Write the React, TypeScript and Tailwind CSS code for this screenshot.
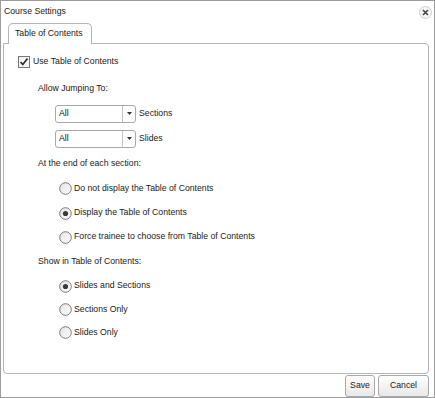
import { ReactNode } from 'react'

const font = { fontFamily: '"Liberation Sans", Arial, sans-serif' }

const Radio = ({ checked }: { checked?: boolean }) => (
  <svg width="13" height="13" viewBox="0 0 13 13" className="shrink-0">
    <defs>
      <linearGradient id="rg" x1="0" y1="0" x2="1" y2="1">
        <stop offset="0" stopColor="#e2e2e2" />
        <stop offset="1" stopColor="#ffffff" />
      </linearGradient>
    </defs>
    <circle cx="6.5" cy="6.5" r="5.8" fill="url(#rg)" stroke="#7b7b7b" strokeWidth="1" />
    {checked && <circle cx="6.5" cy="6.5" r="2.6" fill="#3a3a3a" />}
  </svg>
)

const Select = () => (
  <div className="flex h-[18px] w-[81px] items-center rounded-[3px] border border-[#a9a9a9] bg-white">
    <span className="flex-1 pl-[3px] text-[8.7px] text-[#111]">All</span>
    <div className="flex h-full w-[13px] items-center justify-center border-l border-[#c4c4c4]">
      <svg width="5" height="3" viewBox="0 0 5 3">
        <path d="M0 0h5L2.5 3z" fill="#333" />
      </svg>
    </div>
  </div>
)

const Row = ({ h, indent, children }: { h: string; indent: string; children: ReactNode }) => (
  <div className={`flex items-center ${h} ${indent}`}>{children}</div>
)

export default function App() {
  return (
    <div
      className="flex h-[398px] w-[435px] flex-col border border-[#9c9c9c] bg-white text-[8.7px] text-[#1a1a1a]"
      style={font}
    >
      {/* title bar */}
      <div className="flex h-[22px] items-center justify-between pl-[3px] pr-[2px]">
        <span>Course Settings</span>
        <div className="flex h-[13px] w-[13px] items-center justify-center rounded-full border border-[#cfcfcf] bg-[#f6f6f6]">
          <svg width="7" height="7" viewBox="0 0 7 7">
            <path d="M1 1l5 5M6 1l-5 5" stroke="#444" strokeWidth="1.6" />
          </svg>
        </div>
      </div>

      {/* tabs */}
      <div className="flex pl-[7px]">
        <div className="relative z-10 -mb-px flex h-[21px] w-[84px] items-center rounded-t-[5px] border border-b-0 border-[#b4b4b4] bg-white pl-[6px]">
          Table of Contents
        </div>
      </div>

      {/* panel */}
      <div className="ml-[2px] mr-[5px] flex h-[331px] flex-col rounded-b-[4px] rounded-tr-[4px] border border-[#b4b4b4]">
        <Row h="h-[24px] mt-[6px]" indent="pl-[14px]">
          <svg width="12" height="12" viewBox="0 0 12 12" className="mr-[3px] shrink-0">
            <rect x="0.5" y="0.5" width="11" height="11" fill="#f4f4f4" stroke="#777" />
            <path d="M2.5 6l2.3 2.5L9.5 2.5" fill="none" stroke="#2a2a2a" strokeWidth="1.7" />
          </svg>
          Use Table of Contents
        </Row>
        <Row h="h-[24px] mt-[3px]" indent="pl-[34px]">Allow Jumping To:</Row>
        <Row h="h-[25px]" indent="pl-[51px]">
          <Select />
          <span className="ml-[3px]">Sections</span>
        </Row>
        <Row h="h-[25px]" indent="pl-[51px]">
          <Select />
          <span className="ml-[3px]">Slides</span>
        </Row>
        <Row h="h-[25px]" indent="pl-[34px]">At the end of each section:</Row>
        <Row h="h-[25px]" indent="pl-[55px]">
          <Radio />
          <span className="ml-[2px]">Do not display the Table of Contents</span>
        </Row>
        <Row h="h-[24px]" indent="pl-[55px]">
          <Radio checked />
          <span className="ml-[2px]">Display the Table of Contents</span>
        </Row>
        <Row h="h-[24px]" indent="pl-[55px]">
          <Radio />
          <span className="ml-[2px]">Force trainee to choose from Table of Contents</span>
        </Row>
        <Row h="h-[25px]" indent="pl-[34px]">Show in Table of Contents:</Row>
        <Row h="h-[24px]" indent="pl-[55px]">
          <Radio checked />
          <span className="ml-[2px]">Slides and Sections</span>
        </Row>
        <Row h="h-[23px]" indent="pl-[55px]">
          <Radio />
          <span className="ml-[2px]">Sections Only</span>
        </Row>
        <Row h="h-[23px]" indent="pl-[55px]">
          <Radio />
          <span className="ml-[2px]">Slides Only</span>
        </Row>
      </div>

      {/* footer */}
      <div className="flex flex-1 items-center justify-end gap-[3px] pr-[5px]">
        <button className="h-[22px] w-[30px] rounded-[3px] border border-[#a8a8a8] bg-gradient-to-b from-white to-[#e8e8e8]">
          Save
        </button>
        <button className="h-[22px] w-[51px] rounded-[3px] border border-[#a8a8a8] bg-gradient-to-b from-white to-[#e8e8e8]">
          Cancel
        </button>
      </div>
    </div>
  )
}
